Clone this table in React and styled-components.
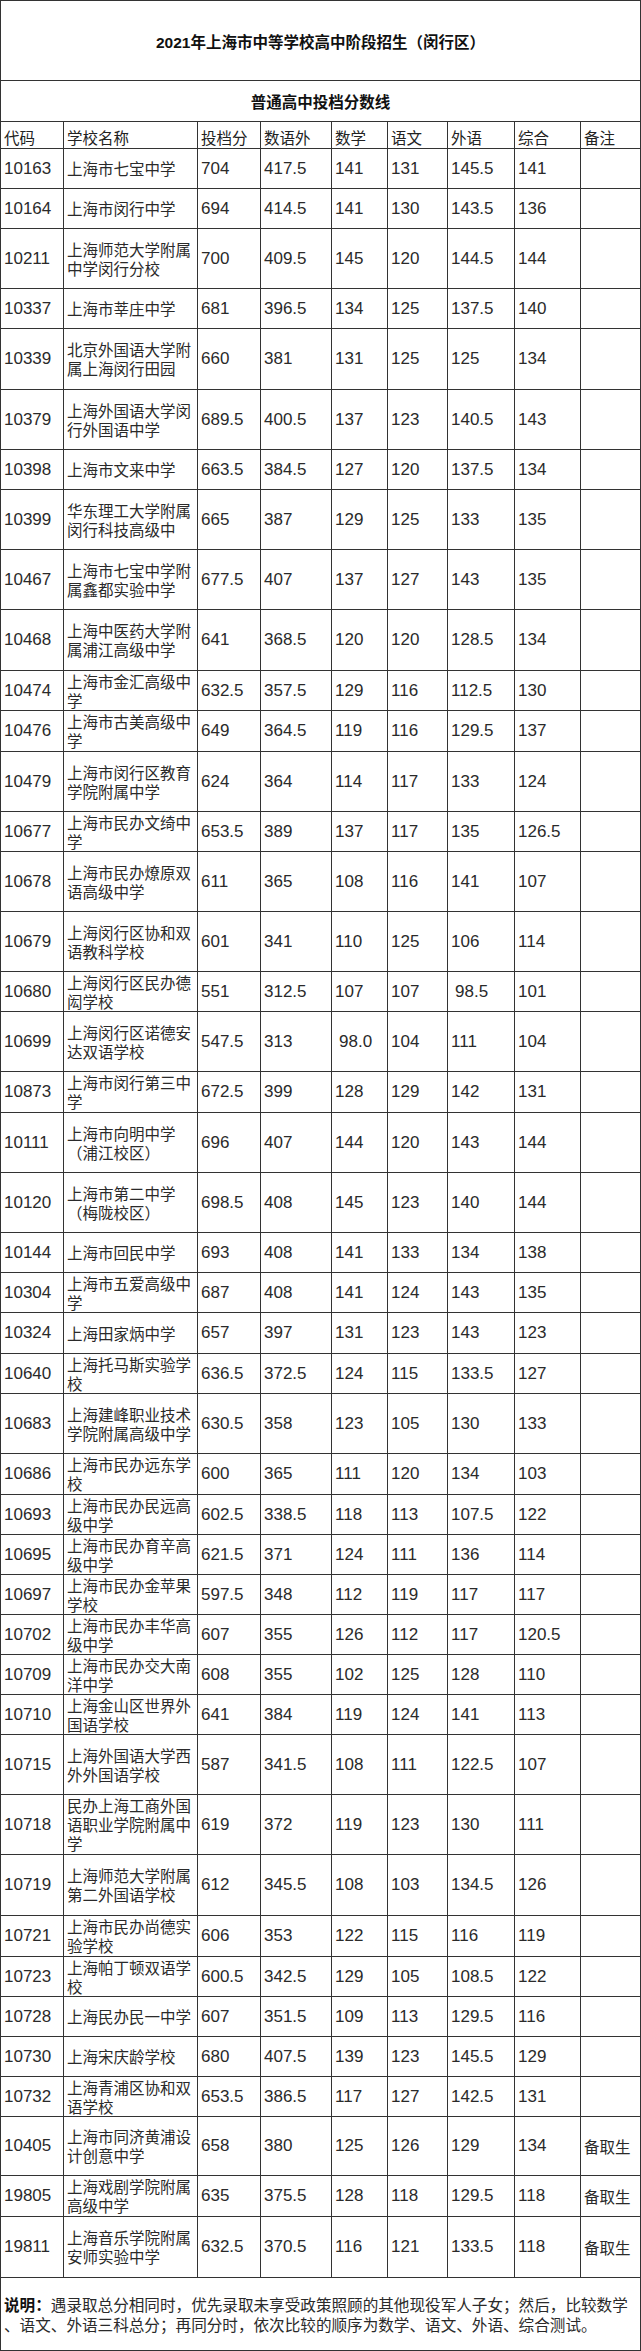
import React from 'react';
import styled, { createGlobalStyle } from 'styled-components';

const GlobalStyle = createGlobalStyle`
  body {
    margin: 0;
    background: #ffffff;
  }
`;

const LINE = '#333333';
const CJK = '"Noto Sans CJK SC", "Noto Sans", sans-serif';
const NARROW = '"Liberation Sans Narrow", "Liberation Sans", "Noto Sans CJK SC", sans-serif';

const Sheet = styled.div`
  width: 641px;
  box-sizing: border-box;
  border-left: 1px solid ${LINE};
  border-top: 1px solid ${LINE};
  color: #222;
  font-family: ${CJK};
`;

const Banner = styled.div`
  height: ${(p) => p.$h}px;
  box-sizing: border-box;
  border-right: 1px solid ${LINE};
  border-bottom: 1px solid ${LINE};
  display: flex;
  align-items: center;
  justify-content: center;
  font-family: "Liberation Sans", "Noto Sans CJK SC", sans-serif;
  font-size: 15.5px;
  font-weight: 700;
  color: #111;
`;

const Row = styled.div`
  display: grid;
  grid-template-columns: 63px 134px 63px 71px 56px 60px 67px 66px 60px;
  height: ${(p) => p.$h}px;
`;

const Cell = styled.div`
  box-sizing: border-box;
  border-right: 1px solid ${LINE};
  border-bottom: 1px solid ${LINE};
  display: flex;
  align-items: center;
  padding-left: ${(p) => (p.$indent ? 7 : 3)}px;
  overflow: hidden;
`;

const HeadCell = styled(Cell)`
  padding-top: 3px;
  font-size: 15.5px;
  white-space: nowrap;
`;

const Num = styled(Cell)`
  font-family: ${NARROW};
  font-size: 17px;
  color: #2a2a2a;
`;

const Name = styled(Cell)`
  font-size: 15.5px;
  line-height: 19px;
  white-space: pre-line;
  color: #2a2a2a;
`;

const Note = styled(Cell)`
  font-size: 15.5px;
  color: #2a2a2a;
  white-space: nowrap;
`;

const Footer = styled.div`
  height: 73px;
  box-sizing: border-box;
  border-right: 1px solid ${LINE};
  border-bottom: 1px solid ${LINE};
  padding-left: 3px;
  display: flex;
  flex-direction: column;
  justify-content: center;
  font-size: 15.6px;
  line-height: 20px;
  color: #2a2a2a;
  white-space: nowrap;
`;

const Strong = styled.b`
  color: #111;
`;

const headers = ['代码', '学校名称', '投档分', '数语外', '数学', '语文', '外语', '综合', '备注'];

// code, name, height, scores..., note
const rows = [
  ['10163', '上海市七宝中学', 40, ['704', '417.5', '141', '131', '145.5', '141']],
  ['10164', '上海市闵行中学', 40, ['694', '414.5', '141', '130', '143.5', '136']],
  ['10211', '上海师范大学附属\n中学闵行分校', 60, ['700', '409.5', '145', '120', '144.5', '144']],
  ['10337', '上海市莘庄中学', 40, ['681', '396.5', '134', '125', '137.5', '140']],
  ['10339', '北京外国语大学附\n属上海闵行田园', 61, ['660', '381', '131', '125', '125', '134']],
  ['10379', '上海外国语大学闵\n行外国语中学', 60, ['689.5', '400.5', '137', '123', '140.5', '143']],
  ['10398', '上海市文来中学', 40, ['663.5', '384.5', '127', '120', '137.5', '134']],
  ['10399', '华东理工大学附属\n闵行科技高级中', 60, ['665', '387', '129', '125', '133', '135']],
  ['10467', '上海市七宝中学附\n属鑫都实验中学', 60, ['677.5', '407', '137', '127', '143', '135']],
  ['10468', '上海中医药大学附\n属浦江高级中学', 61, ['641', '368.5', '120', '120', '128.5', '134']],
  ['10474', '上海市金汇高级中\n学', 40, ['632.5', '357.5', '129', '116', '112.5', '130']],
  ['10476', '上海市古美高级中\n学', 41, ['649', '364.5', '119', '116', '129.5', '137']],
  ['10479', '上海市闵行区教育\n学院附属中学', 60, ['624', '364', '114', '117', '133', '124']],
  ['10677', '上海市民办文绮中\n学', 40, ['653.5', '389', '137', '117', '135', '126.5']],
  ['10678', '上海市民办燎原双\n语高级中学', 60, ['611', '365', '108', '116', '141', '107']],
  ['10679', '上海闵行区协和双\n语教科学校', 60, ['601', '341', '110', '125', '106', '114']],
  ['10680', '上海闵行区民办德\n闳学校', 40, ['551', '312.5', '107', '107', '~98.5', '101']],
  ['10699', '上海闵行区诺德安\n达双语学校', 60, ['547.5', '313', '~98.0', '104', '111', '104']],
  ['10873', '上海市闵行第三中\n学', 41, ['672.5', '399', '128', '129', '142', '131']],
  ['10111', '上海市向明中学\n（浦江校区）', 60, ['696', '407', '144', '120', '143', '144']],
  ['10120', '上海市第二中学\n（梅陇校区）', 60, ['698.5', '408', '145', '123', '140', '144']],
  ['10144', '上海市回民中学', 40, ['693', '408', '141', '133', '134', '138']],
  ['10304', '上海市五爱高级中\n学', 40, ['687', '408', '141', '124', '143', '135']],
  ['10324', '上海田家炳中学', 41, ['657', '397', '131', '123', '143', '123']],
  ['10640', '上海托马斯实验学\n校', 40, ['636.5', '372.5', '124', '115', '133.5', '127']],
  ['10683', '上海建峰职业技术\n学院附属高级中学', 60, ['630.5', '358', '123', '105', '130', '133']],
  ['10686', '上海市民办远东学\n校', 41, ['600', '365', '111', '120', '134', '103']],
  ['10693', '上海市民办民远高\n级中学', 40, ['602.5', '338.5', '118', '113', '107.5', '122']],
  ['10695', '上海市民办育辛高\n级中学', 40, ['621.5', '371', '124', '111', '136', '114']],
  ['10697', '上海市民办金苹果\n学校', 40, ['597.5', '348', '112', '119', '117', '117']],
  ['10702', '上海市民办丰华高\n级中学', 40, ['607', '355', '126', '112', '117', '120.5']],
  ['10709', '上海市民办交大南\n洋中学', 40, ['608', '355', '102', '125', '128', '110']],
  ['10710', '上海金山区世界外\n国语学校', 40, ['641', '384', '119', '124', '141', '113']],
  ['10715', '上海外国语大学西\n外外国语学校', 60, ['587', '341.5', '108', '111', '122.5', '107']],
  ['10718', '民办上海工商外国\n语职业学院附属中\n学', 60, ['619', '372', '119', '123', '130', '111']],
  ['10719', '上海师范大学附属\n第二外国语学校', 61, ['612', '345.5', '108', '103', '134.5', '126']],
  ['10721', '上海市民办尚德实\n验学校', 41, ['606', '353', '122', '115', '116', '119']],
  ['10723', '上海帕丁顿双语学\n校', 40, ['600.5', '342.5', '129', '105', '108.5', '122']],
  ['10728', '上海民办民一中学', 40, ['607', '351.5', '109', '113', '129.5', '116']],
  ['10730', '上海宋庆龄学校', 40, ['680', '407.5', '139', '123', '145.5', '129']],
  ['10732', '上海青浦区协和双\n语学校', 40, ['653.5', '386.5', '117', '127', '142.5', '131']],
  ['10405', '上海市同济黄浦设\n计创意中学', 59, ['658', '380', '125', '126', '129', '134'], '备取生'],
  ['19805', '上海戏剧学院附属\n高级中学', 41, ['635', '375.5', '128', '118', '129.5', '118'], '备取生'],
  ['19811', '上海音乐学院附属\n安师实验中学', 61, ['632.5', '370.5', '116', '121', '133.5', '118'], '备取生'],
];

const App = () => (
  <>
    <GlobalStyle />
    <Sheet>
      <Banner $h={80}>2021年上海市中等学校高中阶段招生（闵行区）</Banner>
      <Banner $h={41}>普通高中投档分数线</Banner>
      <Row $h={27}>
        {headers.map((h) => (
          <HeadCell key={h}>{h}</HeadCell>
        ))}
      </Row>
      {rows.map(([code, name, h, scores, note]) => (
        <Row key={code} $h={h}>
          <Num>{code}</Num>
          <Name>{name}</Name>
          {scores.map((s, i) => (
            // a leading "~" marks a value the sheet shows indented
            <Num key={i} $indent={s.startsWith('~')}>
              {s.replace('~', '')}
            </Num>
          ))}
          <Note>{note}</Note>
        </Row>
      ))}
      <Footer>
        <div>
          <Strong>说明：</Strong>遇录取总分相同时，优先录取未享受政策照顾的其他现役军人子女；然后，比较数学
        </div>
        <div>、语文、外语三科总分；再同分时，依次比较的顺序为数学、语文、外语、综合测试。</div>
      </Footer>
    </Sheet>
  </>
);

export default App;
